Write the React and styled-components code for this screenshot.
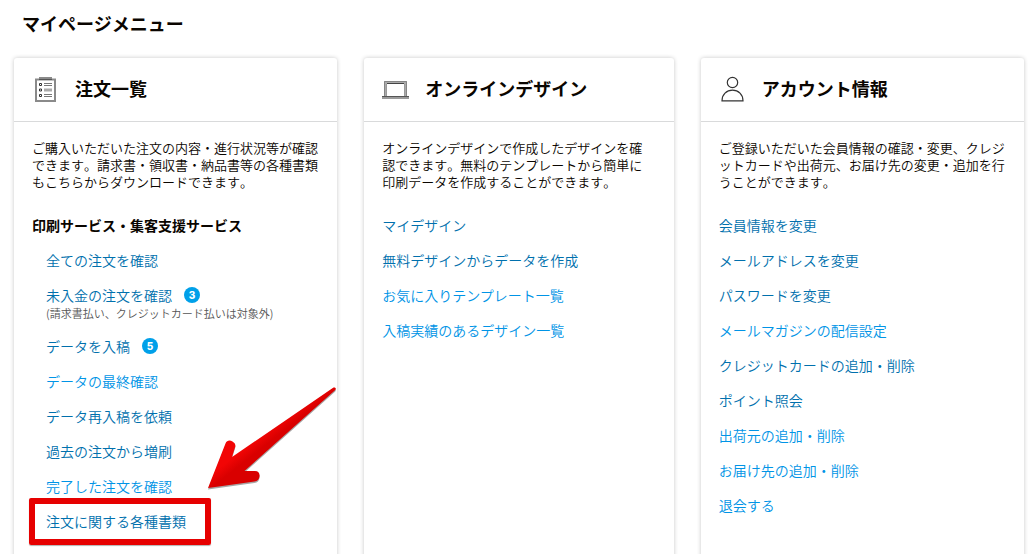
import styled, { createGlobalStyle } from 'styled-components'

const colors = {
  text: '#0a0500',
  link: '#0070ad',
  linkLight: '#0094e6',
  badge: '#00a0e9',
  note: '#555555',
  icon: '#333333',
  border: '#d9dadb',
  marker: '#e60000',
}

const GlobalStyle = createGlobalStyle`
  * {
    box-sizing: border-box;
  }

  body {
    margin: 0;
    background: #ffffff;
    color: ${colors.text};
    font-family: 'Noto Sans CJK JP', sans-serif;
    font-size: 14px;
    font-weight: 350;
    line-height: 20px;
  }
`

const PageWrapper = styled.main`
  padding: 10px 9px 24px 14px;
`

const PageTitle = styled.h1`
  margin: 0 0 22px;
  padding-left: 8px;
  font-size: 18px;
  line-height: 26px;
  font-weight: 700;
`

const CardGrid = styled.div`
  display: grid;
  grid-template-columns: 24fr 23fr 24fr;
  column-gap: 27px;
`

const Card = styled.section`
  border-radius: 3px;
  background: #ffffff;
  box-shadow: 0 0 4px rgba(0, 0, 0, 0.22);
`

const CardHeader = styled.header`
  display: flex;
  align-items: center;
  gap: 15px;
  min-height: 64px;
  padding: 0 18px;
  border-bottom: 1px solid ${colors.border};
`

const CardIcon = styled.svg`
  flex: none;
  width: 28px;
  height: 27px;
  fill: none;
  stroke: ${colors.icon};
`

const CardTitle = styled.h2`
  margin: 0;
  padding-bottom: 4px;
  font-size: 18px;
  line-height: 26px;
  font-weight: 700;
`

const CardBody = styled.div`
  padding: 17px 19px 40px 18px;
`

const Description = styled.p`
  margin: 0 0 25px;
  font-size: 13px;
  line-height: 17px;
  line-break: loose;
  font-kerning: none;
  text-spacing-trim: space-all;
`

const GroupTitle = styled.h3`
  margin: 0 0 15px;
  font-size: 14px;
  line-height: 20px;
  font-weight: 700;
`

const LinkList = styled.ul`
  display: flex;
  flex-direction: column;
  gap: 15px;
  margin: 0;
  padding: 0 0 0 ${({ $indent }) => ($indent ? '14px' : '0')};
  list-style: none;
`

const LinkItem = styled.li`
  position: relative;
`

const LinkRow = styled.div`
  display: flex;
  align-items: center;
  gap: 12px;
`

const MenuLink = styled.a`
  color: ${({ $light }) => ($light ? colors.linkLight : colors.link)};
  text-decoration: none;

  &:hover {
    text-decoration: underline;
  }
`

const Badge = styled.span`
  width: 16px;
  height: 16px;
  border-radius: 50%;
  background: ${colors.badge};
  color: #ffffff;
  font-family: Inter, sans-serif;
  font-size: 10px;
  line-height: 16px;
  font-weight: 800;
  text-align: center;
`

const Note = styled.small`
  display: block;
  color: ${colors.note};
  font-size: 11px;
  line-height: 16px;
  white-space: nowrap;
`

const MarkerFrame = styled.span`
  position: absolute;
  top: -13px;
  left: -17px;
  width: 182px;
  height: 47px;
  border: 6px solid ${colors.marker};
  border-radius: 2px;
  box-shadow: 0 1px 1px rgba(0, 0, 0, 0.3);
  pointer-events: none;
`

const MarkerArrow = styled.svg`
  position: absolute;
  top: -131px;
  left: 154px;
  width: 140px;
  height: 120px;
  pointer-events: none;
`

function OrderIcon() {
  return (
    <CardIcon viewBox="0 0 28 27" aria-hidden="true">
      <path d="M4 3.500h19v21.500H4z" stroke="#8a8a8a" strokeWidth="2" />
      <path d="M7 2.500h13" stroke="#8a8a8a" strokeWidth="3" />
      <path d="M7 3.500h13" stroke="#555555" />
      <path d="M7.500 7.500h2v2h-2zM7.500 13h2v2h-2zM7.500 18.500h2v2h-2z" />
      <path d="M12 7.500h8M12 9.500h8M12 18.500h8M12 20.500h8" stroke="#777777" />
      <path d="M12 14h8" stroke="#aaaaaa" strokeWidth="3" />
    </CardIcon>
  )
}

function DesignIcon() {
  return (
    <CardIcon viewBox="0 0 28 27" aria-hidden="true">
      <path d="M3.500 20V6.500h20V20" stroke="#aaaaaa" strokeWidth="3" />
      <path d="M2.500 20V5.500h22V20" stroke="#858585" />
      <path d="M5 7.500h17" stroke="#444444" />
      <path d="M4.500 20V8M22.500 20V8" stroke="#999999" />
      <path d="M0 21.500h27" stroke="#9a9a9a" strokeWidth="3" />
      <path d="M0 20.500h27" stroke="#555555" />
    </CardIcon>
  )
}

function AccountIcon() {
  return (
    <CardIcon viewBox="0 0 28 27" strokeWidth="1.200" aria-hidden="true">
      <circle cx="13.500" cy="6.500" r="5.200" />
      <path d="M3 24.800C3 18.500 7.500 14.200 13.500 14.200S24 18.500 24 24.800z" />
    </CardIcon>
  )
}

function Marker() {
  return (
    <>
      <MarkerFrame />
      <MarkerArrow viewBox="0 0 140 120" aria-hidden="true">
        <defs>
          <linearGradient id="arrowFill" gradientUnits="userSpaceOnUse" x1="50" y1="48" x2="72" y2="76">
            <stop offset="0.350" stopColor="#f20505" />
            <stop offset="0.650" stopColor="#d90000" />
          </linearGradient>
        </defs>
        <path
          d="M8 108.500 25.500 64C27 60 30 60 32.500 61.500C35 63 36 65 35 67.500L32 77.500L133.500 8C135.500 7.500 136.500 9 135.300 10.500L44.500 91.500L55 91.500C58.500 91.500 60 94 59.500 97C59 100 57.500 101.500 54.500 102Z"
          fill="#000000"
          opacity="0.35"
          transform="translate(0 1)"
        />
        <path
          d="M8 108 25.500 63.500C27 60 30 60 32.500 61.500C35 63 36 65 35 67.500L32 77L133.500 7.500C135.500 7 136.500 8.500 135.300 10L44.500 91L55 91C58.500 91 60 93.500 59.500 96.500C59 99.500 57.500 101 54.500 101.500Z"
          fill="url(#arrowFill)"
        />
      </MarkerArrow>
    </>
  )
}

const cards = [
  {
    title: '注文一覧',
    Icon: OrderIcon,
    description:
      'ご購入いただいた注文の内容・進行状況等が確認できます。請求書・領収書・納品書等の各種書類もこちらからダウンロードできます。',
    group: '印刷サービス・集客支援サービス',
    links: [
      { label: '全ての注文を確認' },
      { label: '未入金の注文を確認', count: 3, note: '(請求書払い、クレジットカード払いは対象外)' },
      { label: 'データを入稿', count: 5 },
      { label: 'データの最終確認', light: true },
      { label: 'データ再入稿を依頼' },
      { label: '過去の注文から増刷' },
      { label: '完了した注文を確認', light: true },
      { label: '注文に関する各種書類', marked: true },
    ],
  },
  {
    title: 'オンラインデザイン',
    Icon: DesignIcon,
    description:
      'オンラインデザインで作成したデザインを確認できます。無料のテンプレートから簡単に印刷データを作成することができます。',
    links: [
      { label: 'マイデザイン' },
      { label: '無料デザインからデータを作成' },
      { label: 'お気に入りテンプレート一覧', light: true },
      { label: '入稿実績のあるデザイン一覧', light: true },
    ],
  },
  {
    title: 'アカウント情報',
    Icon: AccountIcon,
    description:
      'ご登録いただいた会員情報の確認・変更、クレジットカードや出荷元、お届け先の変更・追加を行うことができます。',
    links: [
      { label: '会員情報を変更' },
      { label: 'メールアドレスを変更' },
      { label: 'パスワードを変更' },
      { label: 'メールマガジンの配信設定', light: true },
      { label: 'クレジットカードの追加・削除' },
      { label: 'ポイント照会' },
      { label: '出荷元の追加・削除', light: true },
      { label: 'お届け先の追加・削除', light: true },
      { label: '退会する', light: true },
    ],
  },
]

function MenuCard({ title, Icon, description, group, links }) {
  return (
    <Card>
      <CardHeader>
        <Icon />
        <CardTitle>{title}</CardTitle>
      </CardHeader>
      <CardBody>
        <Description>{description}</Description>
        {group && <GroupTitle>{group}</GroupTitle>}
        <LinkList $indent={Boolean(group)}>
          {links.map(({ label, light, count, note, marked }) => (
            <LinkItem key={label}>
              <LinkRow>
                <MenuLink href="#" $light={light}>
                  {label}
                </MenuLink>
                {count && <Badge>{count}</Badge>}
              </LinkRow>
              {note && <Note>{note}</Note>}
              {marked && <Marker />}
            </LinkItem>
          ))}
        </LinkList>
      </CardBody>
    </Card>
  )
}

function App() {
  return (
    <>
      <GlobalStyle />
      <PageWrapper lang="ja">
        <PageTitle>マイページメニュー</PageTitle>
        <CardGrid>
          {cards.map((card) => (
            <MenuCard key={card.title} {...card} />
          ))}
        </CardGrid>
      </PageWrapper>
    </>
  )
}

export default App
